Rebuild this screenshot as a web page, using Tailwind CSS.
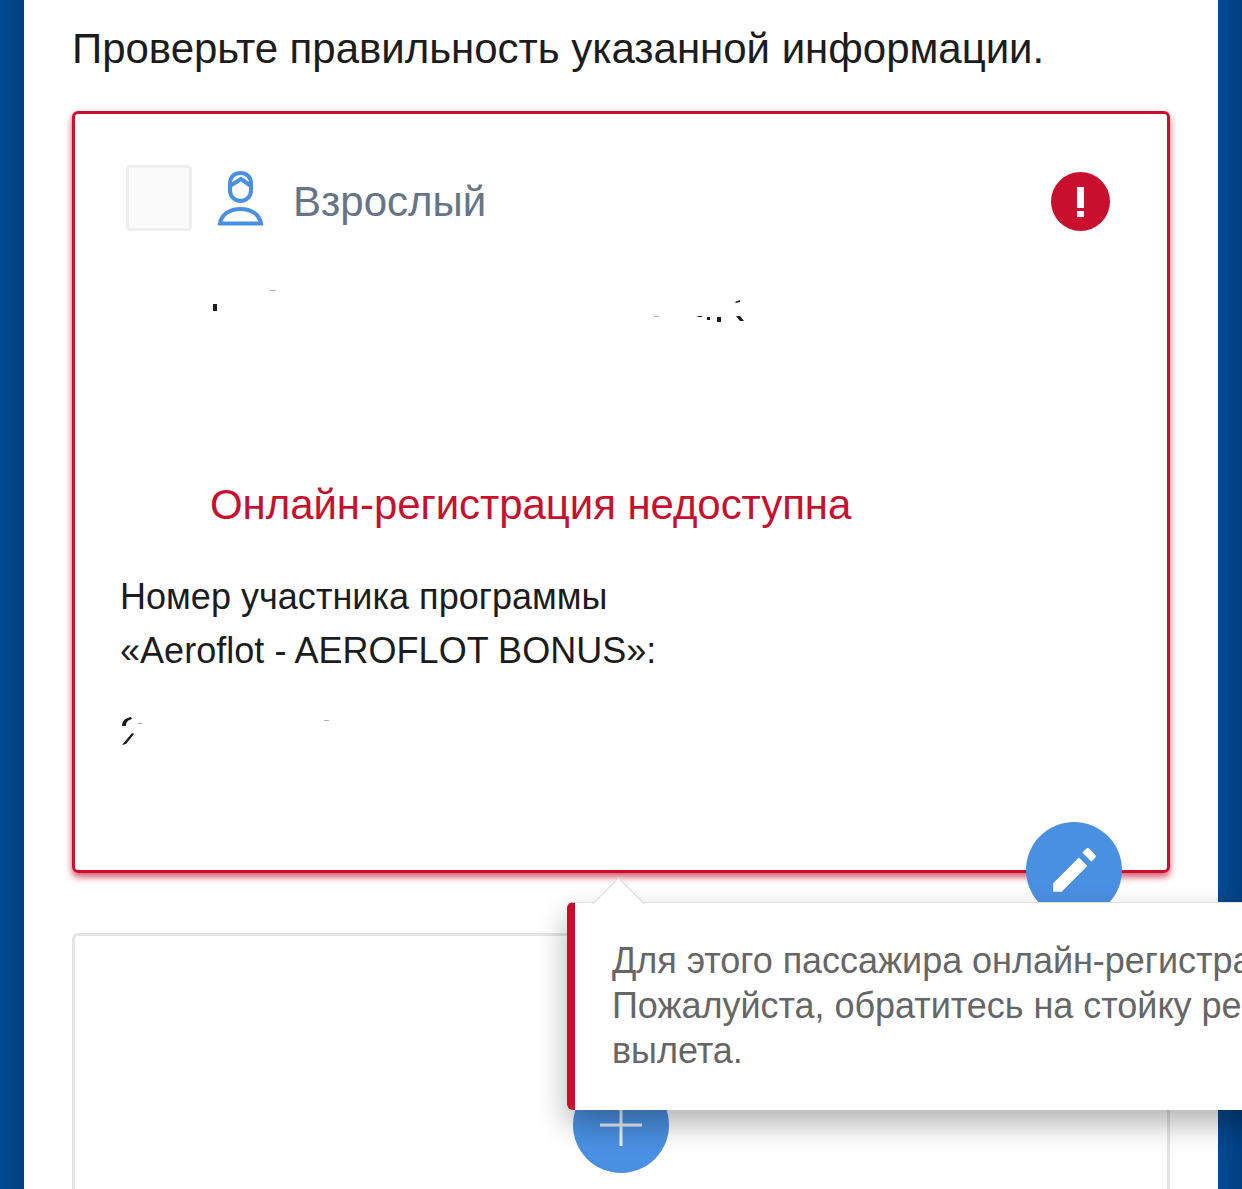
<!DOCTYPE html>
<html lang="ru">
<head>
    <meta charset="UTF-8">
    <meta name="viewport" content="width=device-width, initial-scale=1.0">
    <title>Регистрация</title>
    <script src="https://cdn.jsdelivr.net/npm/@tailwindcss/browser@4"></script>
</head>
<body class="bg-white">
    <div class="relative h-[1189px] w-[1242px] overflow-hidden font-['Liberation_Sans',sans-serif]">
        <div class="flex h-full">
            <div class="w-[24px] shrink-0 bg-gradient-to-r from-[#004b93] to-[#003f80]"></div>
            <main class="w-[1194px] shrink-0 bg-white px-[48px]">
                <h1 class="h-[111px] pt-[24px] text-[42px] leading-[50px] font-normal tracking-[-0.025px] text-[#1c1c1c]">Проверьте правильность указанной информации.</h1>

                <section class="h-[762px] rounded-md border-[3px] border-[#c8102e] px-[45px] pt-[51px] shadow-[0_4px_7px_rgba(200,16,46,0.7)]">
                    <div class="flex items-start">
                        <div class="ml-[6px] size-[66px] rounded border-[3px] border-[#eeeeee] bg-[#fafafa]"></div>
                        <svg class="ml-[25px] mt-[5px] h-[56px] w-[48px] text-[#4a90e2]" viewBox="0 0 48 56" fill="none" stroke="currentColor" stroke-width="4">
                            <path d="M23.500 3c-6 0-10.500 4-10.500 10v7c0 6.500 4.500 11 10.500 11s10.500-4.500 10.500-11v-7c0-6-4.500-10-10.500-10z"/>
                            <path d="M13 16l11-7 10 7"/>
                            <path d="M3 53.500c1.500-9 9.500-14.500 20.500-14.500s19 5.500 20.500 14.500z"/>
                        </svg>
                        <span class="ml-[28px] mt-[12px] text-[42px] leading-[50px] text-[#667585]">Взрослый</span>
                        <div class="ml-auto mr-[12px] mt-[7px] flex size-[59px] items-center justify-center rounded-full bg-[#c8102e]">
                            <svg class="h-[30px] w-[7px]" viewBox="0 0 7 30" fill="#fff"><path d="M0 0h7v21H0zM0 24h7v6H0z"/></svg>
                        </div>
                    </div>

                    <!-- masked passenger name, only bits of it are left -->
                    <svg class="mt-[54px] block h-[40px] w-[640px]" viewBox="0 0 640 40" fill="#1c1c1c">
                        <path d="M93 19h4v7h-4zM576 32l3-1 3 0 0 1zM587 32h3v3h-3zM597 32h4v5h-4zM616 31h4l4 5h-4zM615 17l5-2 0 2-4 1z"/>
                        <path d="M150 5h6v1h-6zM534 31h5v1h-5z" opacity="0.35"/>
                    </svg>

                    <p class="mt-[155px] pl-[90px] text-[42px] leading-[50px] tracking-[-0.07px] text-[#c8102e]">Онлайн-регистрация недоступна</p>
                    <p class="mt-[40px] text-[36px] leading-[54px] tracking-[0.03px] text-[#1c1c1c]">Номер участника программы<br>«Aeroflot - AEROFLOT BONUS»:</p>
                    <svg class="mt-[27px] block h-[40px] w-[220px]" viewBox="0 0 220 40" fill="#1c1c1c">
                        <path d="M2 21c0-5 3-8 9-9l1 2c-4 1-6 3-6 7zM2 40l10-12 2 1-8 10z"/>
                        <path d="M18 18h4v1h-4zM204 15h5v1h-5z" opacity="0.35"/>
                    </svg>
                </section>

                <section class="mt-[60px] h-[400px] rounded-md border-[3px] border-[#e4e4e4]"></section>
            </main>
            <div class="w-[24px] shrink-0 bg-gradient-to-r from-[#004b93] to-[#003f80]"></div>
        </div>

        <!-- edit button -->
        <button class="absolute left-[1026px] top-[822px] flex size-[96px] items-center justify-center rounded-full bg-[#4a90e2]">
            <svg class="size-[58px]" viewBox="0 0 24 24" fill="#fff"><path d="M3.400 17.500V21h3.500L17.500 10.300l-3.500-3.500L3.400 17.500zM20.710 7.040a1 1 0 0 0 0-1.410l-2.340-2.340a1 1 0 0 0-1.410 0l-1.500 1.500 3.750 3.750 1.500-1.500z"/></svg>
        </button>
        <!-- add button -->
        <button class="absolute left-[573px] top-[1077px] flex size-[96px] items-center justify-center rounded-full bg-[#4a90e2]">
            <svg class="size-[42px]" viewBox="0 0 42 42" stroke="#e8eef6" stroke-width="3"><path d="M0 21h42M21 0v42"/></svg>
        </button>

        <!-- tooltip -->
        <div class="absolute left-[567px] top-[902px] h-[208px] w-[700px] rounded-l-md border-l-[8px] border-t border-t-[#e2e2e2] border-l-[#c8102e] bg-white pl-[37px] pt-[35px] shadow-[0_14px_30px_rgba(0,0,0,0.3)]">
            <div class="absolute left-[24.500px] top-[-18.500px] size-[37px] rotate-45 border-l border-t border-[#d8d8d8] bg-white"></div>
            <p class="relative whitespace-nowrap text-[36px] leading-[45px] tracking-[-0.03px] text-[#666666]">Для этого пассажира онлайн-регистрация недоступна.<br>Пожалуйста, обратитесь на стойку регистрации до<br>вылета.</p>
        </div>
    </div>
</body>
</html>
